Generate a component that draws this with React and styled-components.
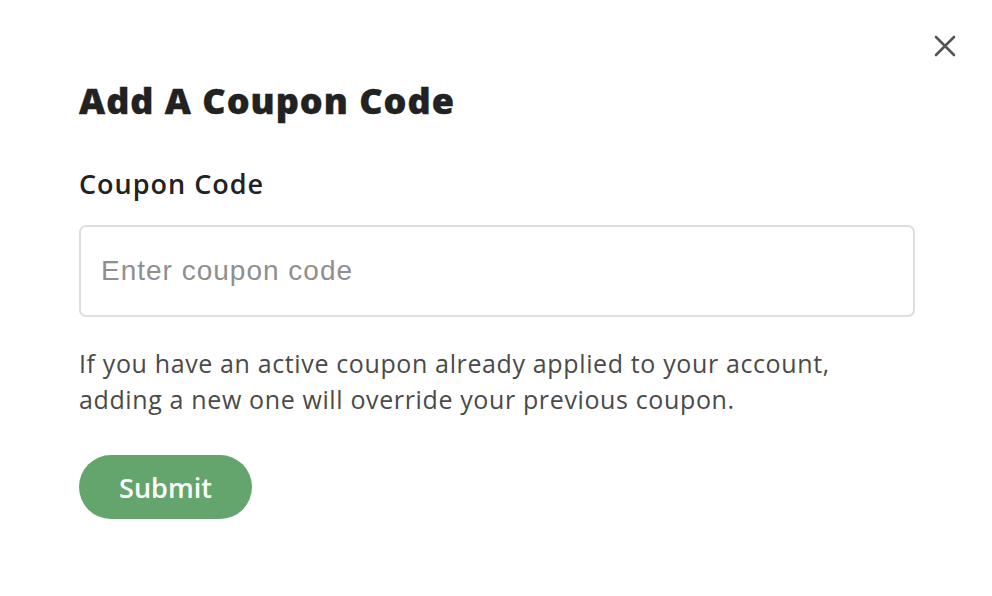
import React from "react";
import styled, { createGlobalStyle } from "styled-components";

const Global = createGlobalStyle`
  html, body { margin: 0; padding: 0; background: #fff; }
  body { font-family: "Open Sans", "Noto Sans", sans-serif; }
  * { box-sizing: border-box; }
`;

const Modal = styled.div`
  position: relative;
  width: 992px;
  height: 596px;
  background: #fff;
  padding: 78px 77px 0 79px;
  display: flex;
  flex-direction: column;
`;

const Close = styled.button`
  position: absolute;
  top: 33px;
  right: 34px;
  width: 26px;
  height: 26px;
  padding: 0;
  border: 0;
  background: none;
  display: flex;
  align-items: center;
  justify-content: center;
  cursor: pointer;
`;

const Title = styled.h1`
  margin: 0;
  font-size: 36px;
  font-weight: 800;
  color: #222;
  line-height: 46px;
  letter-spacing: 1px;
  -webkit-text-stroke: 0.4px #222;
`;

const Label = styled.label`
  margin-top: 44px;
  font-size: 27px;
  font-weight: 600;
  color: #222;
  line-height: 32px;
  letter-spacing: 1px;
`;

const Input = styled.input`
  margin-top: 25px;
  height: 92px;
  width: 836px;
  border: 2px solid #dcdfe2;
  border-radius: 7px;
  padding: 0 20px;
  font-family: "Liberation Sans", Arial, sans-serif;
  font-size: 28px;
  letter-spacing: 1px;
  color: #333;
  outline: none;
  &::placeholder { color: #8f8f8f; }
`;

const Help = styled.p`
  margin: 28px 0 0;
  font-size: 25px;
  line-height: 36px;
  letter-spacing: 0.63px;
  color: #4a4a4a;
  font-weight: 400;
`;

const Submit = styled.button`
  margin-top: 38px;
  align-self: flex-start;
  width: 173px;
  height: 64px;
  border: 0;
  border-radius: 32px;
  background: #63a56d;
  color: #fff;
  font-family: "Open Sans", "Noto Sans", sans-serif;
  font-size: 27px;
  font-weight: 600;
  cursor: pointer;
`;

export default function App() {
  return (
    <>
      <Global />
      <Modal>
        <Close aria-label="Close">
          <svg width="22" height="22" viewBox="0 0 22 22">
            <path d="M2 2 L20 20 M20 2 L2 20" stroke="#555" strokeWidth="2.6" strokeLinecap="round" />
          </svg>
        </Close>
        <Title>Add A Coupon Code</Title>
        <Label htmlFor="coupon">Coupon Code</Label>
        <Input id="coupon" placeholder="Enter coupon code" />
        <Help>
          If you have an active coupon already applied to your account,
          <br />
          adding a new one will override your previous coupon.
        </Help>
        <Submit>Submit</Submit>
      </Modal>
    </>
  );
}
